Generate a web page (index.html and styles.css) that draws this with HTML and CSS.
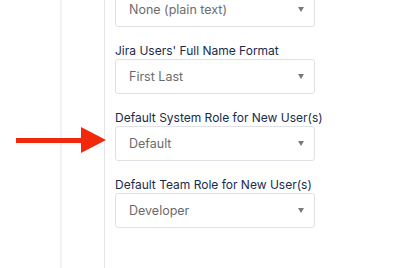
FILE: index.html
```html
<!DOCTYPE html>
<html lang="en">
<head>
  <meta charset="UTF-8">
  <title>User Settings</title>
  <link rel="stylesheet" href="styles.css">
</head>
<body>
  <div class="page">
    <!-- left rails -->
    <div class="rail"></div>
    <div class="rail-edge"></div>
    <div class="sidebar"></div>

    <!-- form -->
    <div class="form">
      <div class="field first">
        <div class="select">
          <span>None (plain text)</span>
          <span class="caret"></span>
        </div>
      </div>

      <div class="field">
        <label>Jira Users' Full Name Format</label>
        <div class="select">
          <span>First Last</span>
          <span class="caret"></span>
        </div>
      </div>

      <div class="field">
        <label>Default System Role for New User(s)</label>
        <div class="select">
          <span>Default</span>
          <span class="caret"></span>
        </div>
      </div>

      <div class="field">
        <label>Default Team Role for New User(s)</label>
        <div class="select">
          <span>Developer</span>
          <span class="caret"></span>
        </div>
      </div>
    </div>
  </div>

  <!-- annotation arrow -->
  <svg class="pointer" width="92" height="28" viewBox="0 0 92 28">
    <rect x="0" y="11" width="67" height="5" fill="#f2280c"/>
    <polygon points="65,0 90,13 65,26" fill="#f2280c"/>
  </svg>
</body>
</html>
```

FILE: styles.css
```css
:root {
  --label-color: #172b4d;
  --value-color: #6b6b6b;
  --border-color: #dfe1e6;
  --rail-color: #f1f2f4;
  --line-color: #e4e5e8;
}

* {
  box-sizing: border-box;
}

body {
  margin: 0;
  background: #fff;
  font-family: Inter, "Liberation Sans", sans-serif;
  font-size: 12px;
  overflow: hidden;
}

.page {
  display: flex;
  height: 268px;
}

/* Left rails */
.rail {
  width: 60px;
}

.rail-edge {
  width: 2px;
  background: var(--rail-color);
}

.sidebar {
  width: 43px;
  border-right: 1px solid var(--line-color);
}

/* Form */
.form {
  padding-left: 10px;
  flex: 1;
}

.field {
  margin-bottom: 15px;
}

.field.first {
  margin-top: -8px;
}

label {
  display: block;
  color: var(--label-color);
  line-height: 17px;
  white-space: nowrap;
}

.select {
  display: flex;
  align-items: center;
  justify-content: space-between;
  height: 35px;
  width: 200px;
  padding: 0 10px 0 13px;
  border: 1px solid var(--border-color);
  border-radius: 3px;
  color: var(--value-color);
  font-size: 12.5px;
}

.caret {
  width: 0;
  height: 0;
  border-left: 3.5px solid transparent;
  border-right: 3.5px solid transparent;
  border-top: 5px solid #7a7a7a;
}

/* Annotation */
.pointer {
  position: absolute;
  left: 16px;
  top: 127px;
}
```
